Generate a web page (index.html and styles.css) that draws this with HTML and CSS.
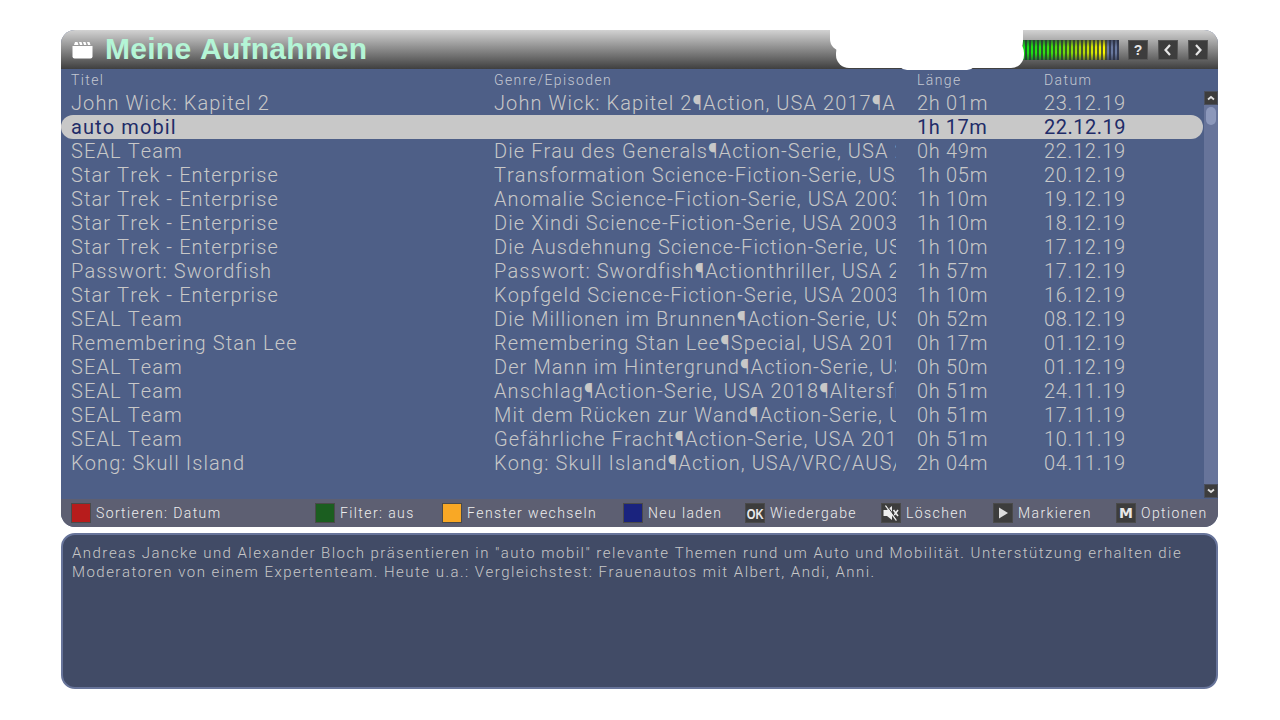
FILE: index.html
```html
<!DOCTYPE html>
<html lang="de">
<head>
    <meta charset="UTF-8">
    <title>Meine Aufnahmen</title>
    <link rel="stylesheet" href="styles.css">
</head>
<body>
    <div class="screen">
        <div class="panel">
            <div class="header">
                <svg class="clapper" width="22" height="18" viewBox="0 0 22 18">
                    <path d="M0.500 5h20v10.500a2 2 0 0 1-2 2h-16a2 2 0 0 1-2-2z" fill="#fff"/>
                    <path d="M2 4l1-3h2.500l1 3zM8 4l-1-3h2.500l1 3zM12 4l-1-3h2.500l1 3zM16 4l-1-3h2.500l1 3z" fill="#fff"/>
                </svg>
                <div class="title">Meine Aufnahmen</div>
                <div class="meter"></div>
                <div class="hbtn">
                    <svg width="20" height="20" viewBox="0 0 20 20"><text x="10" y="15" class="qmark">?</text></svg>
                </div>
                <div class="hbtn">
                    <svg width="20" height="20" viewBox="0 0 20 20"><path d="M12 5l-4.500 5 4.500 5" class="chev"/></svg>
                </div>
                <div class="hbtn">
                    <svg width="20" height="20" viewBox="0 0 20 20"><path d="M8 5l4.500 5-4.500 5" class="chev"/></svg>
                </div>
                <div class="blob blob-a"></div>
                <div class="blob blob-b"></div>
                <div class="blob blob-c"></div>
            </div>
            <div class="listarea">
                <div class="row heads">
                    <div>Titel</div><div>Genre/Episoden</div><div>Länge</div><div>Datum</div>
                </div>
                <div class="list">
                    <div class="row"><div>John Wick: Kapitel 2</div><div>John Wick: Kapitel 2¶Action, USA 2017¶Altersfreigabe: ab 16</div><div>2h 01m</div><div>23.12.19</div></div>
                    <div class="row current"><div>auto mobil</div><div></div><div>1h 17m</div><div>22.12.19</div></div>
                    <div class="row"><div>SEAL Team</div><div>Die Frau des Generals¶Action-Serie, USA 2018</div><div>0h 49m</div><div>22.12.19</div></div>
                    <div class="row"><div>Star Trek - Enterprise</div><div>Transformation Science-Fiction-Serie, USA 2003</div><div>1h 05m</div><div>20.12.19</div></div>
                    <div class="row"><div>Star Trek - Enterprise</div><div>Anomalie Science-Fiction-Serie, USA 2003</div><div>1h 10m</div><div>19.12.19</div></div>
                    <div class="row"><div>Star Trek - Enterprise</div><div>Die Xindi Science-Fiction-Serie, USA 2003</div><div>1h 10m</div><div>18.12.19</div></div>
                    <div class="row"><div>Star Trek - Enterprise</div><div>Die Ausdehnung Science-Fiction-Serie, USA 2003</div><div>1h 10m</div><div>17.12.19</div></div>
                    <div class="row"><div>Passwort: Swordfish</div><div>Passwort: Swordfish¶Actionthriller, USA 2001</div><div>1h 57m</div><div>17.12.19</div></div>
                    <div class="row"><div>Star Trek - Enterprise</div><div>Kopfgeld Science-Fiction-Serie, USA 2003</div><div>1h 10m</div><div>16.12.19</div></div>
                    <div class="row"><div>SEAL Team</div><div>Die Millionen im Brunnen¶Action-Serie, USA 2018</div><div>0h 52m</div><div>08.12.19</div></div>
                    <div class="row"><div>Remembering Stan Lee</div><div>Remembering Stan Lee¶Special, USA 2018</div><div>0h 17m</div><div>01.12.19</div></div>
                    <div class="row"><div>SEAL Team</div><div>Der Mann im Hintergrund¶Action-Serie, USA 2018</div><div>0h 50m</div><div>01.12.19</div></div>
                    <div class="row"><div>SEAL Team</div><div>Anschlag¶Action-Serie, USA 2018¶Altersfreigabe</div><div>0h 51m</div><div>24.11.19</div></div>
                    <div class="row"><div>SEAL Team</div><div>Mit dem Rücken zur Wand¶Action-Serie, USA 2018</div><div>0h 51m</div><div>17.11.19</div></div>
                    <div class="row"><div>SEAL Team</div><div>Gefährliche Fracht¶Action-Serie, USA 2018</div><div>0h 51m</div><div>10.11.19</div></div>
                    <div class="row"><div>Kong: Skull Island</div><div>Kong: Skull Island¶Action, USA/VRC/AUS/VNM 2017</div><div>2h 04m</div><div>04.11.19</div></div>
                </div>
                <div class="scrollbar">
                    <div class="sbtn">
                        <svg width="12" height="12" viewBox="0 0 12 12"><path d="M3 7.500l3-2.500 3 2.500" class="schev"/></svg>
                    </div>
                    <div class="track"><div class="thumb"></div></div>
                    <div class="sbtn">
                        <svg width="12" height="12" viewBox="0 0 12 12"><path d="M3 4.500l3 2.500 3-2.500" class="schev"/></svg>
                    </div>
                </div>
            </div>
            <div class="footer">
                <div class="key k1"><span class="swatch red"></span>Sortieren: Datum</div>
                <div class="key k2"><span class="swatch green"></span>Filter: aus</div>
                <div class="key k3"><span class="swatch yellow"></span>Fenster wechseln</div>
                <div class="key k4"><span class="swatch blue"></span>Neu laden</div>
                <div class="key k5"><span class="swatch dark"><b class="oktext">OK</b></span>Wiedergabe</div>
                <div class="key k6"><span class="swatch dark">
                    <svg width="18" height="18" viewBox="0 0 18 18">
                        <path d="M1.500 6h3.500l5-4v14l-5-4H1.500z" fill="#eee"/>
                        <path d="M11.500 6l4.500 6M16 6l-4.500 6" stroke="#eee" stroke-width="1.600" fill="none"/>
                        <path d="M3.500 1.500l11 15" stroke="#eee" stroke-width="1.300" fill="none"/>
                        <path d="M4.500 1l11 15" stroke="#3d3d3d" stroke-width="1" fill="none"/>
                    </svg>
                </span>Löschen</div>
                <div class="key k7"><span class="swatch dark">
                    <svg width="18" height="18" viewBox="0 0 18 18"><path d="M5 3.500l9 5.500-9 5.500z" fill="#ddd"/></svg>
                </span>Markieren</div>
                <div class="key k8"><span class="swatch dark"><b class="mtext">M</b></span>Optionen</div>
            </div>
        </div>
        <div class="description">Andreas Jancke und Alexander Bloch präsentieren in "auto mobil" relevante Themen rund um Auto und Mobilität. Unterstützung erhalten die Moderatoren von einem Expertenteam. Heute u.a.: Vergleichstest: Frauenautos mit Albert, Andi, Anni.</div>
    </div>
</body>
</html>
```

FILE: styles.css
```css
* {
    box-sizing: border-box;
}
body {
    margin: 0;
    background: #fff;
    font-family: Roboto, "Liberation Sans", sans-serif;
    font-weight: 300;
    font-kerning: none;
    overflow: hidden;
}
.screen {
    width: 1157px;
    margin: 30px 0 0 61px;
}
.panel {
    height: 497px;
    background: #4e5f87;
    border-radius: 14px;
    overflow: hidden;
}
.header {
    position: relative;
    height: 39px;
    display: flex;
    align-items: center;
    background: linear-gradient(#d2d2d2, #3f3f3f);
    padding-left: 11px;
}
.clapper {
    flex: none;
}
.title {
    font-family: "Liberation Sans", Arial, sans-serif;
    font-weight: 700;
    font-size: 30px;
    letter-spacing: 0.270px;
    color: #b4f5d6;
    margin: 0 0 2px 11px;
}
.meter {
    width: 96px;
    height: 20px;
    margin-left: auto;
    margin-right: 9px;
    background:
        linear-gradient(rgba(40, 45, 60, 0.6), rgba(40, 45, 60, 0) 35%, rgba(40, 45, 60, 0) 65%, rgba(40, 45, 60, 0.6)),
        repeating-linear-gradient(90deg, transparent 0 2px, rgba(35, 40, 60, 0.75) 2px 4px),
        linear-gradient(90deg, #14e014 0, #3fe00c 30%, #a8d808 60%, #f8f800 84%, #f0e800 87%, #6a7aa0 88%, #6a7aa0 100%);
}
.hbtn {
    width: 20px;
    height: 20px;
    margin-right: 10px;
    background: #3d3d3d;
    border: 1px solid #555;
}
.hbtn svg {
    display: block;
    margin: -1px;
}
.qmark {
    font-family: "Liberation Sans", sans-serif;
    font-weight: 700;
    font-size: 14px;
    fill: #e6e6e6;
    text-anchor: middle;
}
.chev {
    fill: none;
    stroke: #e6e6e6;
    stroke-width: 2.200;
}
/* white patches lying over the header */
.blob {
    position: absolute;
    background: #fff;
}
.blob-a {
    left: 769px;
    top: 0;
    width: 193px;
    height: 21px;
    border-radius: 0 0 10px 12px;
}
.blob-b {
    left: 775px;
    top: 10px;
    width: 188px;
    height: 28px;
    border-radius: 13px;
}
.blob-c {
    left: 836px;
    top: 30px;
    width: 80px;
    height: 10px;
    border-radius: 0 0 10px 10px;
}
.listarea {
    position: relative;
    height: 430px;
}
.row {
    display: grid;
    grid-template-columns: 423px 423px 127px 1fr;
    height: 24px;
    line-height: 24px;
    padding-left: 10px;
    font-size: 20px;
    letter-spacing: 1.100px;
    color: #c8c8c8;
    white-space: nowrap;
    width: 1142px;
}
.row > div {
    overflow: hidden;
    padding-right: 20px;
}
.row > div:nth-child(2) {
    padding-right: 0;
    width: 402px;
    letter-spacing: 1.080px;
}
.row > div:nth-child(n+3) {
    letter-spacing: 0.700px;
}
.row.current {
    background: #c8c8c8;
    color: #1f2c68;
    font-weight: 400;
    border-radius: 12px;
}
.row.current > div:nth-child(n+3) {
    letter-spacing: 0.500px;
}
.row.heads > div {
    font-size: 14px;
    letter-spacing: 1.400px;
}
.heads {
    height: 22px;
    line-height: 22px;
    color: #c4c8d2;
}
.scrollbar {
    position: absolute;
    right: 0;
    top: 22px;
    width: 14px;
    height: 407px;
    display: flex;
    flex-direction: column;
    background: #67749a;
}
.sbtn {
    height: 14px;
    flex: none;
    background: #3d3d3d;
    border: 1px solid #4a4f5c;
}
.sbtn svg {
    display: block;
}
.schev {
    fill: none;
    stroke: #e0e0e0;
    stroke-width: 1.800;
}
.track {
    flex: 1;
    padding: 2px 2px 0;
}
.thumb {
    height: 18px;
    background: #8c98bb;
    border-radius: 6px;
}
.footer {
    height: 28px;
    background: #5d5f72;
    display: flex;
    font-size: 14px;
    letter-spacing: 1.400px;
    color: #eee;
}
.key {
    display: flex;
    align-items: center;
    height: 28px;
    white-space: nowrap;
}
.swatch {
    width: 20px;
    height: 20px;
    margin-right: 5px;
    border: 1px solid #4a4a4a;
    display: flex;
    align-items: center;
    justify-content: center;
    flex: none;
}
.red { background: #b71c1c; }
.green { background: #1b5e20; }
.yellow { background: #f9a825; }
.blue { background: #1a237e; }
.dark { background: #3d3d3d; }
.oktext {
    display: inline-block;
    font-family: "Liberation Sans", sans-serif;
    font-weight: 700;
    font-size: 15px;
    letter-spacing: 0;
    color: #e8e8e8;
    transform: scaleX(0.75);
}
.mtext {
    font-family: "DejaVu Sans", sans-serif;
    font-weight: 700;
    font-size: 14px;
    letter-spacing: 0;
    color: #e8e8e8;
}
.k1 { margin-left: 10px; width: 244px; }
.k2 { width: 127px; }
.k3 { width: 181px; }
.k4 { width: 122px; }
.k5 { width: 136px; }
.k6 { width: 112px; }
.k7 { width: 123px; }
.description {
    height: 156px;
    margin-top: 6px;
    background: #414b66;
    border: 2px solid #67749a;
    border-radius: 14px;
    padding: 9px 9px;
    font-size: 15px;
    line-height: 19px;
    letter-spacing: 1.470px;
    color: #c8c8c8;
}
```
